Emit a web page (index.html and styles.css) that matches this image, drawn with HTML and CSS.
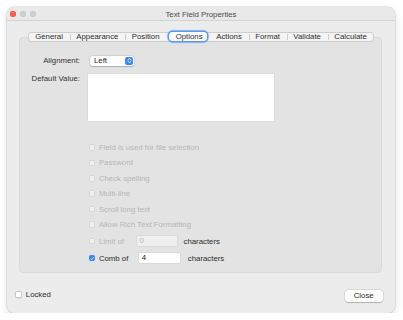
FILE: index.html
```html
<!DOCTYPE html>
<html>
<head>
<meta charset="utf-8">
<link rel="stylesheet" href="styles.css">
</head>
<body>
<div class="window">
  <div class="titlebar">
    <div class="lights">
      <span class="light red"></span>
      <span class="light"></span>
      <span class="light"></span>
    </div>
    <div class="title">Text Field Properties</div>
    <div></div>
  </div>
  <div class="main">
    <div class="tabview">
      <div class="tabs">
        <span class="tab">General</span>
        <span class="tab sep">Appearance</span>
        <span class="tab sep">Position</span>
        <span class="tab selected">Options</span>
        <span class="tab">Actions</span>
        <span class="tab sep">Format</span>
        <span class="tab sep">Validate</span>
        <span class="tab sep">Calculate</span>
      </div>
      <div class="panel">
        <div class="form">
          <div class="lbl lbl-align">Alignment:</div>
          <div class="popup">
            <span class="popup-text">Left</span>
            <span class="stepper">
              <svg width="7" height="7" viewBox="0 0 7 7"><path d="M2 2.8 L3.5 1.4 L5 2.8 M2 4.2 L3.5 5.6 L5 4.2" fill="none" stroke="#fff" stroke-width="0.9" stroke-linecap="round" stroke-linejoin="round"/></svg>
            </span>
          </div>
          <div class="lbl lbl-dv">Default Value:</div>
          <div class="textarea"></div>
        </div>
        <div class="options">
          <div class="opt disabled"><span class="cb"></span><span>Field is used for file selection</span></div>
          <div class="opt disabled"><span class="cb"></span><span>Password</span></div>
          <div class="opt disabled"><span class="cb"></span><span>Check spelling</span></div>
          <div class="opt disabled"><span class="cb"></span><span>Multi-line</span></div>
          <div class="opt disabled"><span class="cb"></span><span>Scroll long text</span></div>
          <div class="opt disabled"><span class="cb"></span><span>Allow Rich Text Formatting</span></div>
          <div class="opt disabled limit"><span class="cb"></span><span>Limit of</span><span class="field field-off">0</span><span class="chars">characters</span></div>
          <div class="opt comb"><span class="cb checked"><svg width="7" height="7" viewBox="0 0 7 7"><path d="M1.6 3.7 L2.9 5 L5.4 1.9" fill="none" stroke="#fff" stroke-width="1" stroke-linecap="round" stroke-linejoin="round"/></svg></span><span>Comb of</span><span class="field">4</span><span class="chars">characters</span></div>
        </div>
      </div>
    </div>
    <div class="footer">
      <div class="locked"><span class="cb cb-white"></span><span>Locked</span></div>
      <div class="btn">Close</div>
    </div>
  </div>
</div>
</body>
</html>
```

FILE: styles.css
```css
html, body {
  margin: 0;
  padding: 0;
  background: #ffffff;
}
body {
  font-family: "Liberation Sans", Arial, sans-serif;
  font-size: 7.8px;
  color: #2c2c2c;
}
.window {
  margin: 7px 0 0 7px;
  width: 388px;
  height: 306px;
  border-radius: 7px;
  background: #ececec;
  box-shadow: 0 0 0 0.6px rgba(0,0,0,0.14), 0 3px 9px rgba(0,0,0,0.12);
  display: flex;
  flex-direction: column;
  overflow: hidden;
}
.titlebar {
  height: 14px;
  flex: none;
  display: grid;
  grid-template-columns: 1fr auto 1fr;
  align-items: center;
  background: #e9e9e9;
  border-bottom: 0.6px solid #d3d3d3;
  box-sizing: border-box;
}
.lights {
  display: flex;
  gap: 3.6px;
  padding-left: 3px;
  padding-top: 1px;
}
.light {
  width: 6.4px;
  height: 6.4px;
  border-radius: 50%;
  background: #cfcfcf;
  box-shadow: inset 0 0 0 0.4px rgba(0,0,0,0.08);
}
.light.red {
  background: #fe5f57;
  box-shadow: inset 0 0 0 0.4px rgba(200,40,30,0.5);
}
.title {
  color: #4b4b4b;
  padding-top: 1px;
}
.main {
  flex: 1;
  display: flex;
  flex-direction: column;
}
.tabview {
  margin: 10.5px 13px 0 12px;
  display: flex;
  flex-direction: column;
  align-items: center;
}
.tabs {
  position: relative;
  z-index: 1;
  height: 10px;
  box-sizing: border-box;
  display: flex;
  align-items: center;
  background: #f4f4f4;
  border: 0.6px solid #cdcdcd;
  border-radius: 3px;
  margin-left: 1px;
}
.tab {
  position: relative;
  padding: 0 6.7px;
  line-height: 9px;
  color: #2c2c2c;
}
.tab.sep::before {
  content: "";
  position: absolute;
  left: 0;
  top: 1.5px;
  width: 0.6px;
  height: 6px;
  background: #cdcdcd;
}
.tab.selected {
  background: #ffffff;
  border-radius: 3.5px;
  box-shadow: 0 0 0 1.4px #5a99f2, 0 0 0 2.2px rgba(120,170,245,0.35);
  height: 9.6px;
  line-height: 9.6px;
  padding: 0 4.5px 0 7px;
  margin: 0 2.5px 0 2.5px;
}
.panel {
  align-self: stretch;
  margin-top: -5px;
  height: 236px;
  box-sizing: border-box;
  background: #e3e3e3;
  border: 0.5px solid #dadada;
  border-radius: 4px;
  padding-top: 18px;
}
.form {
  display: grid;
  grid-template-columns: 60px 186px;
  column-gap: 8px;
  row-gap: 7.8px;
}
.lbl {
  text-align: right;
  color: #333333;
}
.lbl-align {
  align-self: center;
}
.lbl-dv {
  padding-top: 0.5px;
}
.popup {
  margin-left: 2px;
  width: 44px;
  height: 10.5px;
  box-sizing: border-box;
  background: #ffffff;
  border-radius: 2.5px;
  box-shadow: 0 0 0 0.5px rgba(0,0,0,0.12), 0 0.5px 1px rgba(0,0,0,0.18);
  display: flex;
  align-items: center;
  justify-content: space-between;
  padding: 0 1.2px 0 4px;
}
.popup-text {
  color: #2a2a2a;
}
.stepper {
  width: 7.4px;
  height: 7.6px;
  border-radius: 2px;
  background: #3d86f5;
  display: flex;
  align-items: center;
  justify-content: center;
}
.stepper svg {
  display: block;
}
.textarea {
  height: 47px;
  background: #ffffff;
  box-shadow: 0 0 0 0.5px rgba(0,0,0,0.06);
}
.options {
  margin-top: 19px;
  padding-left: 68.5px;
  display: flex;
  flex-direction: column;
}
.opt {
  height: 15.4px;
  display: flex;
  align-items: center;
  color: #2c2c2c;
}
.opt.disabled {
  color: #b6b6b6;
}
.cb {
  width: 6.6px;
  height: 6.6px;
  flex: none;
  box-sizing: border-box;
  border-radius: 1.6px;
  background: #f0f0f0;
  border: 0.5px solid #d6d6d6;
  margin-right: 3.8px;
  display: flex;
  align-items: center;
  justify-content: center;
}
.cb.checked {
  background: #3d86f5;
  border-color: #3d86f5;
}
.cb.checked svg {
  display: block;
}
.cb-white {
  background: #ffffff;
  border: 0.5px solid #c4c4c4;
  box-shadow: 0 0.4px 0.8px rgba(0,0,0,0.1);
}
.opt.limit {
  margin-top: 1.2px;
}
.opt.comb {
  margin-top: 1.6px;
}
.field {
  height: 10px;
  width: 40px;
  box-sizing: border-box;
  background: #ffffff;
  padding-left: 3px;
  line-height: 10px;
  color: #222;
  box-shadow: 0 0 0 0.5px rgba(0,0,0,0.08);
}
.field-off {
  background: #efefef;
  color: #b6b6b6;
}
.limit .field {
  margin-left: 12.5px;
}
.comb .field {
  margin-left: 10.5px;
  width: 41px;
  height: 10.5px;
  line-height: 10.5px;
}
.chars {
  color: #2c2c2c;
}
.limit .chars {
  margin-left: 7px;
}
.comb .chars {
  margin-left: 8px;
}
.footer {
  height: 40px;
  box-sizing: border-box;
  padding: 5px 12.3px 0 8px;
  display: flex;
  align-items: center;
  justify-content: space-between;
}
.locked {
  display: flex;
  align-items: center;
  color: #2c2c2c;
  margin-top: -1px;
}
.locked .cb {
  width: 7px;
  height: 7px;
}
.btn {
  width: 38px;
  height: 11.4px;
  line-height: 11.4px;
  text-align: center;
  background: #ffffff;
  border-radius: 3px;
  box-shadow: 0 0 0 0.5px rgba(0,0,0,0.13), 0 0.6px 1px rgba(0,0,0,0.2);
  color: #2a2a2a;
  margin-top: 2px;
}
```
